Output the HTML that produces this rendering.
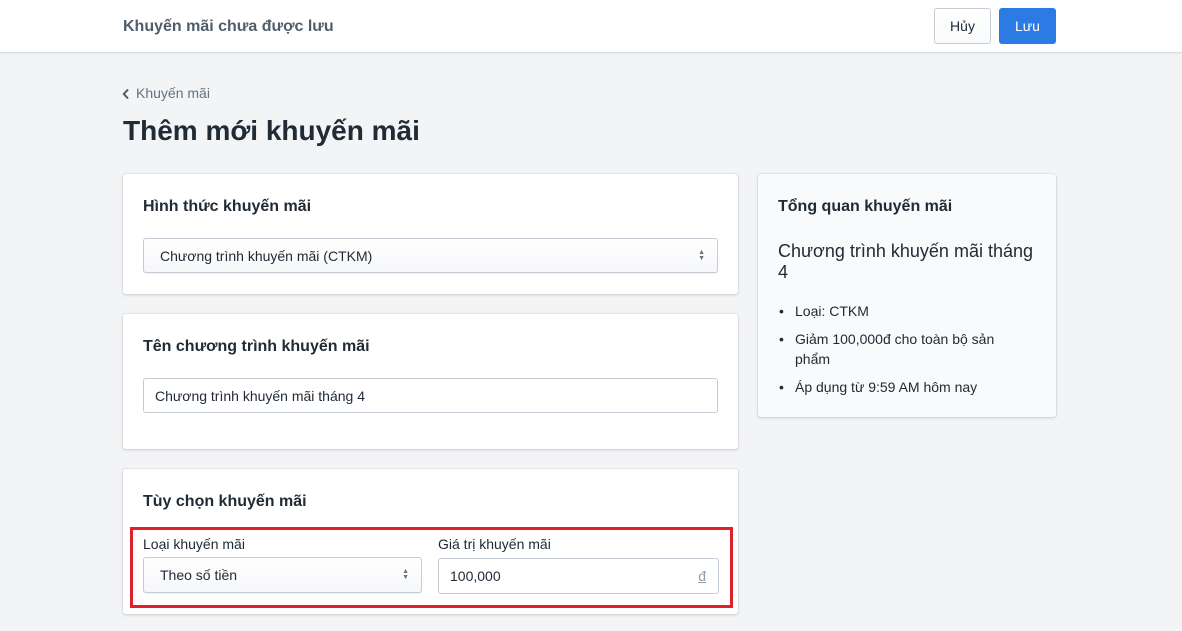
<!DOCTYPE html>
<html><head><meta charset="utf-8"><style>
*{box-sizing:border-box;margin:0;padding:0}
body{width:1182px;height:631px;overflow:hidden;background:#f3f4f6;font-family:"Liberation Sans",sans-serif;color:#212b36;position:relative}
.abs{position:absolute}
.hdr{left:0;top:0;width:1182px;height:53px;background:#fff;border-bottom:1px solid #d9dce0;box-shadow:0 1px 2px rgba(0,0,0,.06)}
.card{background:#fff;border-radius:3px;box-shadow:0 0 0 1px rgba(63,63,68,.05),0 1px 3px rgba(63,63,68,.18)}
.sel{background:linear-gradient(#fff,#f6f7f9);border:1px solid #c4cdd5;border-radius:3px;font-size:14px;color:#212b36;box-shadow:0 1px 0 rgba(22,29,37,.05)}
.inp{background:#fff;border:1px solid #c4cdd5;border-radius:3px;font-size:14px}
.arr{position:absolute;right:12px;top:50%;transform:translateY(-50%);font-size:7px;line-height:6px;color:#637381}
h2{font-size:16px;font-weight:bold}
</style></head><body>
<div class="abs hdr"></div>
<div class="abs" style="left:123px;top:18px;font-size:16px;font-weight:bold;color:#505d6b">Khuyến mãi chưa được lưu</div>
<div class="abs" style="left:934px;top:8px;width:57px;height:36px;border:1px solid #c4cdd5;border-radius:3px;background:linear-gradient(#fff,#f9fafb);font-size:14px;text-align:center;line-height:34px">Hủy</div>
<div class="abs" style="left:999px;top:8px;width:57px;height:36px;border-radius:3px;background:#2c7be5;color:#fff;font-size:14px;text-align:center;line-height:36px">Lưu</div>

<svg class="abs" style="left:122px;top:88px" width="8" height="12" viewBox="0 0 8 12"><path d="M6 1.5 L1.8 6 L6 10.5" fill="none" stroke="#505d6b" stroke-width="2"/></svg>
<div class="abs" style="left:136px;top:85px;font-size:14px;color:#637381">Khuyến mãi</div>
<div class="abs" style="left:123px;top:115px;font-size:28px;font-weight:bold;color:#212b36">Thêm mới khuyến mãi</div>

<div class="abs card" style="left:123px;top:174px;width:615px;height:120px"></div>
<div class="abs" style="left:143px;top:198px"><h2>Hình thức khuyến mãi</h2></div>
<div class="abs sel" style="left:143px;top:238px;width:575px;height:35px;padding:9px 16px">Chương trình khuyến mãi (CTKM)<div class="arr">▲<br>▼</div></div>

<div class="abs card" style="left:123px;top:314px;width:615px;height:135px"></div>
<div class="abs" style="left:143px;top:338px"><h2>Tên chương trình khuyến mãi</h2></div>
<div class="abs inp" style="left:143px;top:378px;width:575px;height:35px;padding:9px 11px">Chương trình khuyến mãi tháng 4</div>

<div class="abs card" style="left:123px;top:469px;width:615px;height:145px"></div>
<div class="abs" style="left:143px;top:493px"><h2>Tùy chọn khuyến mãi</h2></div>
<div class="abs" style="left:130px;top:527px;width:603px;height:81px;border:3px solid #e0212b"></div>
<div class="abs" style="left:143px;top:536px;font-size:14px">Loại khuyến mãi</div>
<div class="abs" style="left:438px;top:536px;font-size:14px">Giá trị khuyến mãi</div>
<div class="abs sel" style="left:143px;top:557px;width:279px;height:36px;padding:9px 16px">Theo số tiền<div class="arr">▲<br>▼</div></div>
<div class="abs inp" style="left:438px;top:558px;width:281px;height:36px;padding:9px 11px">100,000<span style="position:absolute;right:12px;top:9px;color:#919eab;text-decoration:underline">đ</span></div>

<div class="abs card" style="left:758px;top:174px;width:298px;height:243px;background:#f9fafb"></div>
<div class="abs" style="left:778px;top:198px"><h2>Tổng quan khuyến mãi</h2></div>
<div class="abs" style="left:778px;top:241px;width:262px;font-size:18px;line-height:21px;white-space:nowrap">Chương trình khuyến mãi tháng<br>4</div>
<ul class="abs" style="left:778px;top:301px;width:250px;font-size:14px;line-height:20px;list-style:none">
<li style="position:relative;padding-left:17px;margin-bottom:8px"><span style="position:absolute;left:1px">•</span>Loại: CTKM</li>
<li style="position:relative;padding-left:17px;margin-bottom:8px"><span style="position:absolute;left:1px">•</span>Giảm 100,000đ cho toàn bộ sản phẩm</li>
<li style="position:relative;padding-left:17px"><span style="position:absolute;left:1px">•</span>Áp dụng từ 9:59 AM hôm nay</li>
</ul>
</body></html>
